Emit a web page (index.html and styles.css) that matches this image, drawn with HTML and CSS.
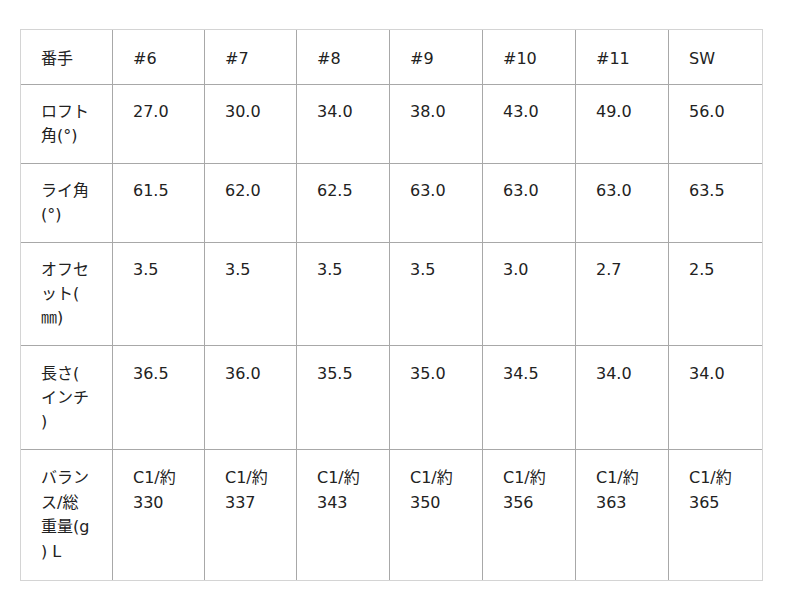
FILE: index.html
```html
<!DOCTYPE html>
<html lang="ja">
<head>
<meta charset="utf-8">
<link rel="stylesheet" href="styles.css">
</head>
<body>
<div class="page">
<table class="spec">
<colgroup>
<col class="w92"><col class="w92"><col class="w92"><col class="w93"><col class="w93"><col class="w93"><col class="w93"><col class="w93">
</colgroup>
<tr class="head"><td>番手</td><td>#6</td><td>#7</td><td>#8</td><td>#9</td><td>#10</td><td>#11</td><td>SW</td></tr>
<tr><td>ロフト角(°)</td><td>27.0</td><td>30.0</td><td>34.0</td><td>38.0</td><td>43.0</td><td>49.0</td><td>56.0</td></tr>
<tr><td>ライ角(°)</td><td>61.5</td><td>62.0</td><td>62.5</td><td>63.0</td><td>63.0</td><td>63.0</td><td>63.5</td></tr>
<tr><td>オフセット(㎜)</td><td>3.5</td><td>3.5</td><td>3.5</td><td>3.5</td><td>3.0</td><td>2.7</td><td>2.5</td></tr>
<tr class="tall"><td>長さ(インチ)</td><td>36.5</td><td>36.0</td><td>35.5</td><td>35.0</td><td>34.5</td><td>34.0</td><td>34.0</td></tr>
<tr class="last"><td>バランス/総重量(g) L</td><td>C1/約330</td><td>C1/約337</td><td>C1/約343</td><td>C1/約350</td><td>C1/約356</td><td>C1/約363</td><td>C1/約365</td></tr>
</table>
</div>
</body>
</html>
```
FILE: styles.css
```css
html, body {
  margin: 0;
  padding: 0;
  background: #fff;
}
.page {
  padding: 29px 20px;
}
.spec {
  width: 743px;
  table-layout: fixed;
  border-collapse: separate;
  border-spacing: 0;
  border: 1px solid #d4d4d4;
  font-family: "DejaVu Sans", "Noto Sans CJK JP", sans-serif;
  font-size: 16px;
  line-height: 24px;
  color: #222;
}
.w92 { width: 92px; }
.w93 { width: 93px; }
.spec td {
  vertical-align: top;
  padding: 15px 20px;
  border-right: 1px solid #a8a8a8;
  border-bottom: 1px solid #a8a8a8;
  word-break: break-all;
  line-break: anywhere;
  text-align: left;
}
.spec td:last-child {
  border-right: none;
  padding-right: 22px;
}
.spec .head td {
  padding-top: 17px;
  padding-bottom: 13px;
}
.spec .tall td {
  padding-top: 16px;
  padding-bottom: 15px;
}
.spec .last td {
  border-bottom: none;
  line-height: 24.5px;
  padding-top: 16px;
  padding-bottom: 16px;
}
```
